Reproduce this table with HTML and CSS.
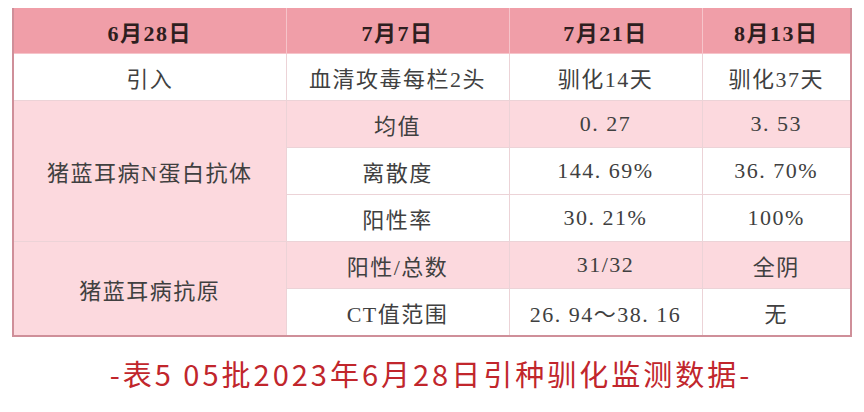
FILE: index.html
```html
<!DOCTYPE html>
<html lang="zh">
<head>
<meta charset="utf-8">
<link rel="stylesheet" href="styles.css">
</head>
<body>
<div class="page">
  <table class="data">
    <colgroup>
      <col class="c1"><col class="c2"><col class="c3"><col class="c4">
    </colgroup>
    <thead>
      <tr class="head">
        <th>6月28日</th><th>7月7日</th><th>7月21日</th><th>8月13日</th>
      </tr>
    </thead>
    <tbody>
      <tr class="white">
        <td>引入</td><td>血清攻毒每栏2头</td><td>驯化14天</td><td>驯化37天</td>
      </tr>
      <tr class="pink">
        <td class="group" rowspan="3">猪蓝耳病N蛋白抗体</td><td>均值</td><td>0. 27</td><td>3. 53</td>
      </tr>
      <tr class="white">
        <td>离散度</td><td>144. 69%</td><td>36. 70%</td>
      </tr>
      <tr class="white">
        <td>阳性率</td><td>30. 21%</td><td>100%</td>
      </tr>
      <tr class="pink">
        <td class="group" rowspan="2">猪蓝耳病抗原</td><td>阳性/总数</td><td>31/32</td><td>全阴</td>
      </tr>
      <tr class="white">
        <td>CT值范围</td><td>26. 94～38. 16</td><td>无</td>
      </tr>
    </tbody>
  </table>
  <p class="caption">-表5 05批2023年6月28日引种驯化监测数据-</p>
</div>
</body>
</html>
```
FILE: styles.css
```css
html, body {
  margin: 0;
  padding: 0;
  background: #ffffff;
}
.page {
  padding: 8px 14px 0 12px;
}
.data {
  width: 838px;
  border-collapse: collapse;
  table-layout: fixed;
  font-family: "Liberation Serif", "Noto Sans CJK SC", serif;
  font-size: 22px;
  letter-spacing: 1.5px;
  color: #404040;
  border-left: 2px solid #cf8f99;
  border-right: 2px solid #cf8f99;
  border-bottom: 2px solid #cf8f99;
}
.c1 { width: 273px; }
.c2 { width: 223px; }
.c3 { width: 193px; }
.c4 { width: 149px; }
.data th, .data td {
  text-align: center;
  vertical-align: middle;
  border: 1px solid #ecd3d7;
  padding: 0;
  height: 46px;
}
.head th {
  background: #f09ea8;
  color: #2e1e20;
  font-weight: bold;
  font-size: 22px;
  border-color: #f6c4ca;
  border-top: none;
  height: 45px;
}
.white td {
  background: #ffffff;
}
.pink td {
  background: #fcd9de;
}
.data td.group {
  background: #fcd9de;
}
.caption {
  margin: 14px 0 0 0;
  text-align: center;
  font-family: "Noto Sans CJK SC", "Noto Sans", sans-serif;
  font-size: 29px;
  letter-spacing: 3px;
  color: #c1262c;
  line-height: 44px;
}
```
